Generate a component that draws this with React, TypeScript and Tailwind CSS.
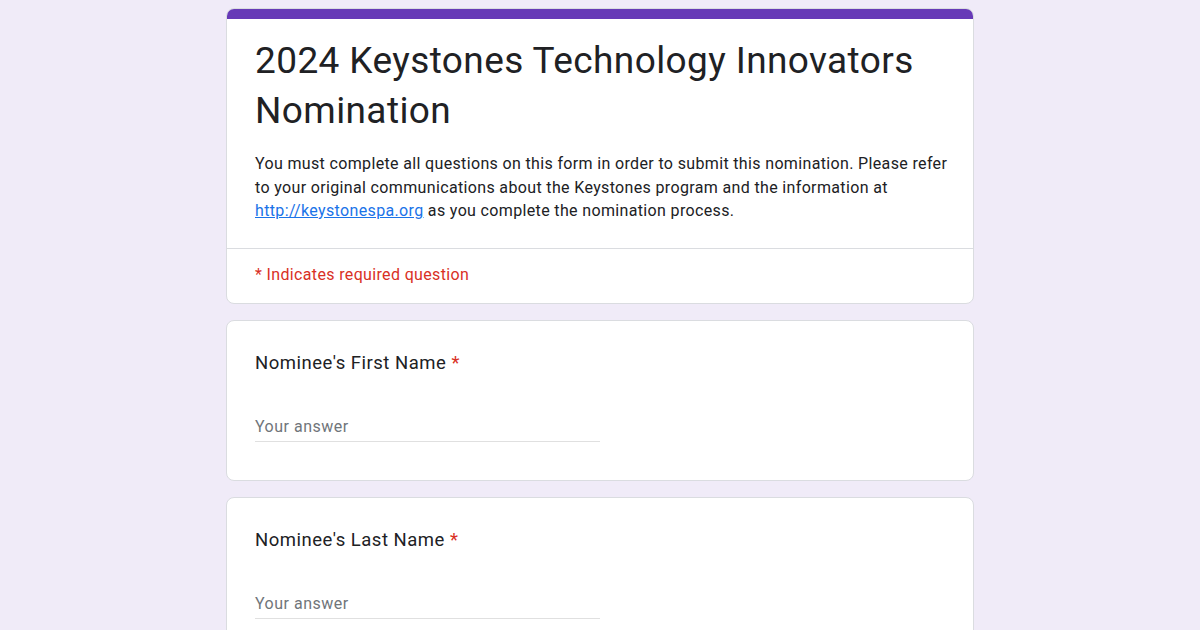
import React from "react";

function Question({ label }: { label: string }) {
  return (
    <div className="w-[748px] rounded-lg border border-[#dadce0] bg-white pl-[28px] pr-6 pt-[30px] pb-[38px]">
      <div className="text-[18.5px] leading-6 tracking-[0.5px] text-[#202124]">
        {label} <span className="text-[#d93025]">*</span>
      </div>
      <div className="mt-[41px] w-[345px] border-b border-[#e0e0e0] pb-[3px] text-[16px] leading-[22px] tracking-[0.5px] text-[#70757a]">
        Your answer
      </div>
    </div>
  );
}

export default function App() {
  return (
    <div
      className="flex min-h-screen flex-col items-center gap-4 bg-[#f0ebf8] pt-2"
      style={{ fontFamily: "Roboto, 'Liberation Sans', sans-serif" }}
    >
      <div className="w-[748px] overflow-hidden rounded-lg border border-[#dadce0] bg-white">
        <div className="-mx-px -mt-px h-[11px] bg-[#673ab7]" />
        <div className="pl-[28px] pr-6 pt-[17px] pb-[25px]">
          <h1 className="text-[37px] leading-[50px] tracking-[0.4px] text-[#202124]">
            2024 Keystones Technology Innovators Nomination
          </h1>
          <p className="mt-[16px] text-[16px] leading-[23.5px] tracking-[0.35px] text-[#202124]">
            You must complete all questions on this form in order to submit this nomination. Please refer to your
            original communications about the Keystones program and the information at{" "}
            <a href="#" className="text-[#1a73e8] underline">
              http://keystonespa.org
            </a>{" "}
            as you complete the nomination process.
          </p>
        </div>
        <div className="border-t border-[#dadce0] pl-[28px] pt-[15px] pb-[17px] text-[16px] leading-[22px] tracking-[0.35px] text-[#d93025]">
          * Indicates required question
        </div>
      </div>
      <Question label="Nominee's First Name" />
      <Question label="Nominee's Last Name" />
    </div>
  );
}
